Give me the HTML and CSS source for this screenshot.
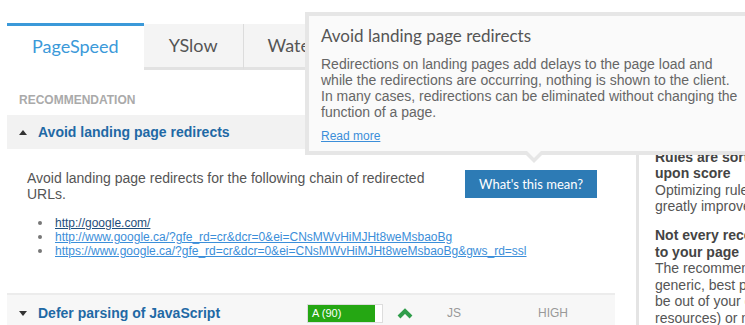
FILE: index.html
```html
<!DOCTYPE html>
<html lang="en">
<head>
    <meta charset="UTF-8">
    <meta name="viewport" content="width=device-width, initial-scale=1.0">
    <title>Performance Report - PageSpeed</title>
    <link rel="stylesheet" href="styles.css">
</head>
<body>

<div class="page">
    <div class="report">
        <ul class="tabs">
            <li class="tab tab-active">PageSpeed</li>
            <li class="tab">YSlow</li>
            <li class="tab">Waterfall</li>
            <li class="tab">Timings</li>
            <li class="tab">Video</li>
        </ul>

        <div class="table-head">
            <div class="col-name">Recommendation</div>
            <div class="col-grade">Grade</div>
            <div>Type</div>
            <div>Priority</div>
        </div>

        <div class="rule rule-open">
            <div class="rule-row">
                <div class="col-name"><span class="toggle"></span>Avoid landing page redirects</div>
                <div class="col-grade">
                    <div class="grade"><div class="grade-fill grade-e" style="width: 53%">E (53)</div></div>
                </div>
                <div class="rule-meta">Server</div>
                <div class="rule-meta">High</div>
            </div>
            <div class="rule-body">
                <div class="rule-intro">
                    <p>Avoid landing page redirects for the following chain of redirected URLs.</p>
                    <button class="explain-button">What's this mean?</button>
                </div>
                <ul class="url-list">
                    <li><a class="visited" href="#">http://google.com/</a></li>
                    <li><a href="#">http://www.google.ca/?gfe_rd=cr&amp;dcr=0&amp;ei=CNsMWvHiMJHt8weMsbaoBg</a></li>
                    <li><a href="#">https://www.google.ca/?gfe_rd=cr&amp;dcr=0&amp;ei=CNsMWvHiMJHt8weMsbaoBg&amp;gws_rd=ssl</a></li>
                </ul>
            </div>
        </div>

        <div class="rule">
            <div class="rule-row">
                <div class="col-name"><span class="toggle"></span>Defer parsing of JavaScript</div>
                <div class="col-grade">
                    <div class="grade"><div class="grade-fill" style="width: 90%">A (90)</div></div>
                    <svg class="trend" width="16" height="12" viewBox="0 0 16 12">
                        <polyline points="2,10 8,4 14,10" fill="none" stroke="#2f9d4a" stroke-width="4"/>
                    </svg>
                </div>
                <div class="rule-meta">JS</div>
                <div class="rule-meta">High</div>
            </div>
        </div>
    </div>

    <div class="tips">
        <h3 class="tips-title">What do these mean?</h3>
        <p>A few things to keep in mind while reading this report.</p>
        <p><strong>Rules are sorted in order of impact upon score</strong><br>
            Optimizing rules at the top of the list can greatly improve your overall score.</p>
        <p><strong>Not every recommendation will apply to your page</strong><br>
            The recommendations are meant to be generic, best practices; some things will be out of your control (eg. external resources) or may not apply to your page.</p>
    </div>

    <!-- popup for the "What's this mean?" button -->
    <div class="tooltip">
        <h3>Avoid landing page redirects</h3>
        <p>Redirections on landing pages add delays to the page load and while the redirections are occurring, nothing is shown to the client. In many cases, redirections can be eliminated without changing the function of a page.</p>
        <p class="tooltip-more"><a href="#">Read more</a></p>
    </div>
</div>

</body>
</html>
```

FILE: styles.css
```css
html, body {
    margin: 0;
    overflow: hidden;
    background-color: #fff;
}

body {
    font-family: "Liberation Sans", Arial, sans-serif;
    color: #555;
}

.page {
    position: relative;
    display: flex;
    gap: 21px;
    padding: 23px 0 0 7px;
}

.report {
    width: 608px;
    flex-shrink: 0;
}

/* tabs */

.tabs {
    list-style: none;
    margin: 0;
    padding: 0;
    display: flex;
    height: 47px;
    overflow: hidden;
}

.tab {
    flex-shrink: 0;
    display: flex;
    align-items: center;
    margin-top: 1px;
    padding: 0 25px 2px;
    font-family: Lato, "Liberation Sans", sans-serif;
    font-size: 18px;
    color: #555;
    background-color: #f4f4f4;
    border-bottom: 3px solid #e2e2e2;
}

.tab + .tab {
    border-left: 1px solid #dcdcdc;
    padding-left: 24px;
}

.tab-active {
    margin-top: 0;
    color: #3b99d9;
    background-color: #fff;
    border-top: 3px solid #3b99d9;
    border-bottom-color: #fff;
}

.tab-active + .tab {
    border-left: 0;
    padding-left: 25px;
}

/* table */

.table-head,
.rule-row {
    display: grid;
    grid-template-columns: 298px 142px 91px 1fr;
    align-items: center;
}

.table-head {
    padding: 23px 0 8px;
    font-size: 12px;
    line-height: 14px;
    font-weight: bold;
    text-transform: uppercase;
    color: #aaa;
}

.table-head .col-name {
    padding-left: 12px;
}

.col-grade {
    display: flex;
    align-items: center;
    padding-left: 2px;
}

.rule-row {
    height: 34px;
    background-color: #f2f2f2;
}

.rule-row .col-name {
    display: flex;
    align-items: center;
    padding-left: 12px;
    font-size: 14px;
    font-weight: bold;
    color: #1f69a5;
}

.toggle {
    width: 0;
    height: 0;
    margin-right: 11px;
    border-left: 4px solid transparent;
    border-right: 4px solid transparent;
    border-top: 5px solid #333;
}

.rule-open .toggle {
    border-top: 0;
    border-bottom: 5px solid #333;
}

.rule + .rule {
    border-top: 2px solid #ececec;
}

.rule + .rule .rule-row {
    height: 36px;
    background-color: #f7f7f7;
}

.grade {
    width: 76px;
    height: 19px;
    box-sizing: border-box;
    border: 1px solid #ddd;
    background-color: #fff;
}

.grade-fill {
    height: 17px;
    box-sizing: border-box;
    padding-left: 4px;
    font-size: 11px;
    line-height: 17px;
    color: #fff;
    background-color: #25a713;
    white-space: nowrap;
}

.grade-e {
    background-color: #e5a11c;
}

.trend {
    margin-left: 14px;
}

.rule-meta {
    font-size: 12px;
    text-transform: uppercase;
    color: #999;
}

.rule-body {
    padding: 21px 18px 35px 20px;
}

.rule-intro {
    display: flex;
    justify-content: space-between;
    align-items: flex-start;
    gap: 20px;
}

.rule-intro p {
    margin: 0;
    flex: 1;
    font-size: 14px;
    line-height: 16px;
}

.explain-button {
    flex-shrink: 0;
    width: 132px;
    height: 28px;
    border: none;
    background-color: #2d7bb5;
    color: #fff;
    font-family: Lato, "Liberation Sans", sans-serif;
    font-size: 13px;
    cursor: pointer;
}

.url-list {
    margin: 14px 0 0;
    padding-left: 28px;
    font-size: 12px;
    line-height: 14px;
}

.url-list li {
    list-style: none;
}

.url-list li::before {
    content: "";
    display: inline-block;
    width: 4px;
    height: 4px;
    margin: 0 13px 2px -17px;
    border-radius: 50%;
    background-color: #777;
    vertical-align: middle;
}

.url-list a {
    color: #3b8ed9;
}

.url-list a.visited {
    color: #1f4f7c;
}

/* side tips */

.tips {
    flex: 0 0 255px;
    border-left: 3px solid #e4e4e4;
    padding-left: 16px;
    font-size: 14px;
    line-height: 16.5px;
    color: #555;
}

.tips-title {
    margin: 0 0 12px;
    padding-top: 44px;
    font-family: Lato, "Liberation Sans", sans-serif;
    font-size: 18px;
    font-weight: normal;
    line-height: 24px;
}

.tips p {
    margin: 0 0 12.5px;
}

.tips strong {
    color: #444;
}

/* popup */

.tooltip {
    position: absolute;
    left: 305px;
    top: 12px;
    z-index: 10;
    width: 424px;
    padding: 9px 12px 8px;
    border: 4px solid #e6e6e6;
    background-color: #fafafa;
}

.tooltip::before,
.tooltip::after {
    content: "";
    position: absolute;
    top: 100%;
    width: 0;
    height: 0;
    border-style: solid;
    border-color: transparent;
    border-bottom-width: 0;
}

.tooltip::before {
    left: 213px;
    border-width: 12px 12px 0;
    border-top-color: #e6e6e6;
}

.tooltip::after {
    left: 218px;
    border-width: 7px 7px 0;
    border-top-color: #fafafa;
}

.tooltip h3 {
    margin: 0 0 10px;
    font-family: Lato, "Liberation Sans", sans-serif;
    font-size: 17px;
    font-weight: normal;
    line-height: 21px;
    color: #555;
}

.tooltip p {
    margin: 0;
    font-size: 14px;
    line-height: 16px;
    color: #666;
}

.tooltip .tooltip-more {
    margin-top: 9px;
    font-size: 12px;
    line-height: 14px;
}

.tooltip-more a {
    color: #3b8ed9;
}
```
